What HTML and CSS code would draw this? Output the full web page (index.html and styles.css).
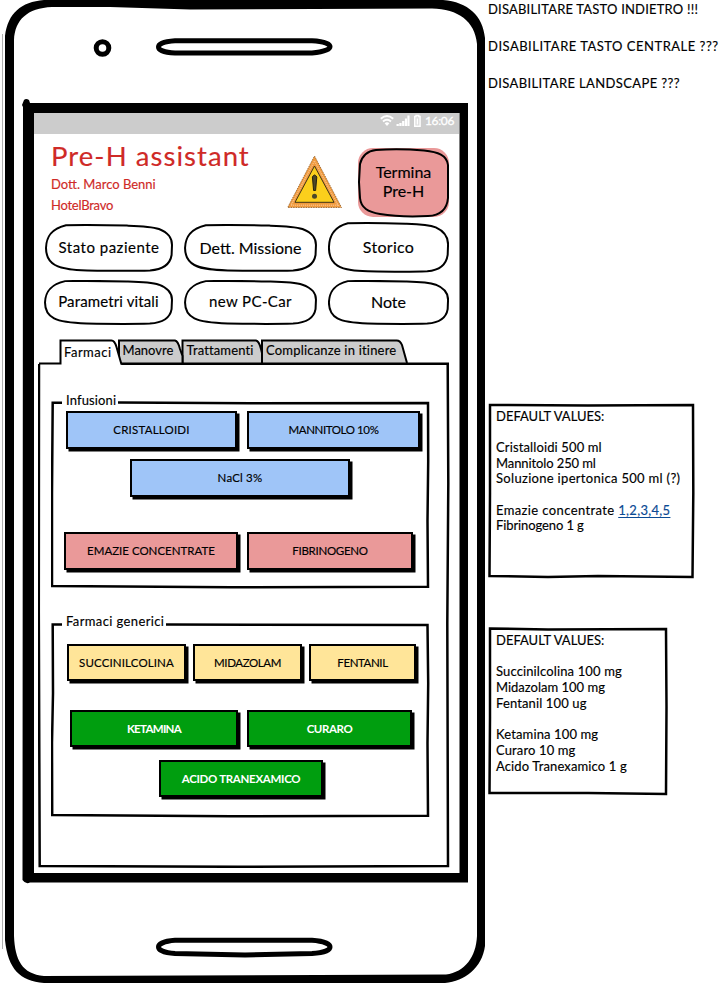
FILE: index.html
```html
<!DOCTYPE html>
<html lang="it">
<head>
<meta charset="utf-8">
<title>Pre-H assistant</title>
<link rel="stylesheet" href="styles.css">
</head>
<body>
<svg class="defs" aria-hidden="true">
  <symbol id="pill" viewBox="0 0 128 48" preserveAspectRatio="none">
    <path d="M21 1.200 C40 .8 60 1 82 1.600 C96 2 106 2.200 114 5 C124 9 127 14 127 21 L126.600 31 C125 41 117 45.600 105 46.400 C85 47.200 62 46.800 42 46.400 C30 46 18 45.500 10 41 C3 37 1 31 1 24 C1.300 14 5 5 21 1.200 Z"/>
  </symbol>
</svg>
<div class="page">
  <main class="phone">
    <svg class="shell" width="487" height="983" viewBox="0 0 487 983" aria-hidden="true">
      <path class="faint" d="M2.500 34V949"/>
      <path fill-rule="evenodd" d="M5 36 C8 13 21 2 44 0 L443 0 C468 2 483 16 485 38 L485 946 C482 968 465 981 445 983 L44 983 C20 981 8 969 5 940 Z M14 40 C15 20 27 8 52 7 L110 7 L190 9.500 L432 8.500 C458 9 475 21 477 44 L477 936 C476 957 465 972 446 974.500 L44 976 C22 974 15 960 14 936 Z"/>
      <circle class="line5" cx="102.500" cy="48" r="6.300"/>
      <path class="line5" d="M175 40.700 L312 40.700 C336 42 336 51 312 53 L175 53 C153 52 153 42 175 40.700 Z"/>
      <path class="line5" d="M175 940.300 L312 940.300 C336 942 336 952 312 953.500 L245 955 L175 953.500 C153 952 153 942 175 940.300 Z"/>
      <path fill-rule="evenodd" d="M22 105 L24 100 Q26 98 29 100 L30 103 H468 V882.500 H30 Q26 885 22.500 880 L23 107 Z M34 113 V873 H459.500 V113 Z"/>
    </svg>
    <div class="screen">
      <div class="status">
        <svg width="42" height="14" viewBox="0 0 42 14" aria-hidden="true">
          <path class="wave" d="M.8 4.800 Q7 -.7 13.200 4.800 M3 7.500 Q7 4 11 7.500"/>
          <path class="white" d="M4.600 9.200 Q7 7.200 9.400 9.200 L7 12 Z"/>
          <path class="white" d="M16.500 12v-2h2.300v2zM19.300 12V9h2.300v3zM22.100 12V7h2.300v5zM24.900 12V4.500h2.100V12zM27.400 12V1.500H29.500V12z"/>
          <path class="cell" d="M34.700 2.500h1.300v-1h2.800v1h1.300v9.800h-5.400z M37.400 4.500v6"/>
        </svg>
        <span>16:06</span>
      </div>
      <header class="head">
        <div class="who">
          <h1>Pre-H assistant</h1>
          <p>Dott. Marco Benni</p>
          <p class="hotel">HotelBravo</p>
        </div>
        <svg class="warn" width="56" height="54" viewBox="0 0 56 54" aria-hidden="true">
          <path fill="#f09a3c" stroke="#8c5a28" stroke-width=".8" stroke-dasharray="1.500 1" d="M27.500 1 L54.500 52.500 H.7 Z"/>
          <path fill="none" stroke="#f7c08a" stroke-width="1.600" stroke-dasharray="1 1" d="M27.500 6 L51 50.300 H4 Z"/>
          <path fill="#fbcf1c" stroke="#3d3218" stroke-width="1" d="M27.500 11 L47 47.300 H8 Z"/>
          <path fill="#4c4728" stroke="#25220f" stroke-width="1" d="M25.400 22 Q27.500 18 29.800 22 L28.600 35.500 H26.600 Z"/>
          <circle fill="#4c4728" cx="27.500" cy="41.300" r="2.500"/>
        </svg>
        <button class="pill stop"><svg viewBox="0 0 91 69"><path d="M18 2 C32 .8 50 1 66 2.500 C80 4 89 7 90 17 L90 50 C89 61 82 67.500 70 68 C50 69 34 68 22 66 C10 64 3 60 2 50 L1 34 L2 16 C4 8 9 3 18 2 Z"/></svg><span>Termina<br>Pre-H</span></button>
      </header>
      <nav class="menu">
        <button class="pill p1 wide5"><svg><use href="#pill"/></svg><span>Stato paziente</span></button>
        <button class="pill p2"><svg><use href="#pill"/></svg><span>Dett. Missione</span></button>
        <button class="pill p3 wide3"><svg><use href="#pill"/></svg><span>Storico</span></button>
        <button class="pill p4 wide1"><svg><use href="#pill"/></svg><span>Parametri vitali</span></button>
        <button class="pill p5 wide4"><svg><use href="#pill"/></svg><span>new PC-Car</span></button>
        <button class="pill p6"><svg><use href="#pill"/></svg><span>Note</span></button>
      </nav>
      <div class="tabs">
        <svg class="tabart" width="410" height="30" viewBox="0 0 410 30" aria-hidden="true">
          <path class="tab" d="M223 26 V2.500 H357 Q361 2 363 7 L368 25"/>
          <path class="tab" d="M143.500 26 V2.500 H217 Q220 3 222 11 L223 15 V26"/>
          <path class="tab" d="M80 26 V2.500 H136 Q139 3 141 11 L143.500 18 V26"/>
          <path class="rule" d="M82 25.800 H410"/>
          <path class="tab open" d="M0 25.500 H21.500 V2.500 H72 Q75.500 2 77.500 9 L82.500 26.500"/>
        </svg>
        <span class="t1 wide5">Farmaci</span><span class="t2">Manovre</span><span class="t3 wide1">Trattamenti</span><span class="t4 wide2">Complicanze in itinere</span>
      </div>
      <section class="panel">
        <svg class="frame" width="412" height="505" viewBox="0 0 412 505" aria-hidden="true"><path d="M1 1 L.8 250 L1.700 503 L200 503.800 L410 503 L409.300 260 L410.300 120 L409.700 1"/></svg>
        <section class="group infusions">
          <svg class="frame" width="380" height="188" viewBox="0 0 380 188" aria-hidden="true"><path d="M11 1.700 H1.700 L1 92 V185 L180 186.300 L377 185.700 L376.500 120 L377.200 60 L377 2 L200 2.200 L67 1.500"/></svg>
          <h2 class="wide1">Infusioni</h2>
          <div class="row r1"><button class="drug blue w171 wide2">CRISTALLOIDI</button><button class="drug blue w173 tight4">MANNITOLO 10%</button></div>
          <div class="row r2"><button class="drug blue w220 wide2">NaCl 3%</button></div>
          <div class="row r3"><button class="drug red w174">EMAZIE CONCENTRATE</button><button class="drug red w166 tight3">FIBRINOGENO</button></div>
        </section>
        <section class="group generic">
          <svg class="frame" width="380" height="195" viewBox="0 0 380 195" aria-hidden="true"><path d="M11 1.500 H1.700 L2 70 L1 120 L1.200 192 L180 193.300 L377 192.700 L376.500 120 L377.200 60 L376.500 2 L200 1.800 L115 1.500"/></svg>
          <h2 class="wide4">Farmaci generici</h2>
          <div class="row r4"><button class="drug yellow w119 wide1">SUCCINILCOLINA</button><button class="drug yellow w109 tight4">MIDAZOLAM</button><button class="drug yellow w107 tight4">FENTANIL</button></div>
          <div class="row r5"><button class="drug green w168 tight7">KETAMINA</button><button class="drug green w165 tight4">CURARO</button></div>
          <div class="row r6"><button class="drug green w164 tight3">ACIDO TRANEXAMICO</button></div>
        </section>
      </section>
    </div>
  </main>
  <aside class="notes">
    <p class="wide2">DISABILITARE TASTO INDIETRO !!!</p>
    <p class="wide5">DISABILITARE TASTO CENTRALE ???</p>
    <p class="wide4">DISABILITARE LANDSCAPE ???</p>
    <div class="note first">
      <svg class="frame" width="208" height="176" viewBox="0 0 208 176" aria-hidden="true"><path d="M2 2 L100 2.500 L205 2 L205.300 90 L204.500 174 L110 173 L60 174 L1.500 173 L2 90 Z"/></svg>
      <div>DEFAULT VALUES:</div><br>
      <div class="wide1">Cristalloidi 500 ml</div>
      <div class="tight1">Mannitolo 250 ml</div>
      <div class="wide3">Soluzione ipertonica 500 ml (?)</div><br>
      <div class="wide4">Emazie concentrate <a href="#">1,2,3,4,5</a></div>
      <div class="tight1">Fibrinogeno 1 g</div>
    </div>
    <div class="note second">
      <svg class="frame" width="181" height="169" viewBox="0 0 181 169" aria-hidden="true"><path d="M2 1.500 L60 2.500 L178 2 L178.500 80 L178 167 L100 166 L1.500 166 L2 90 Z"/></svg>
      <div>DEFAULT VALUES:</div><br>
      <div class="wide1">Succinilcolina 100 mg</div>
      <div>Midazolam 100 mg</div>
      <div class="wide1">Fentanil 100 ug</div><br>
      <div class="wide1">Ketamina 100 mg</div>
      <div class="wide1">Curaro 10 mg</div>
      <div class="wide1">Acido Tranexamico 1 g</div>
    </div>
  </aside>
</div>
</body>
</html>
```
FILE: styles.css
```css
* { box-sizing: border-box; }
body { margin: 0; background: #fff; color: #000; font: 13px/15.7px Lato, sans-serif; overflow: hidden; -webkit-text-stroke: .15px currentColor; }
h1, h2, p { margin: 0; font-weight: 400; }
button { margin: 0; padding: 0; border: 0; background: none; color: inherit; font-family: inherit; letter-spacing: 0; -webkit-text-stroke: inherit; }
.defs { position: absolute; width: 0; height: 0; }
.page { display: flex; width: 719px; height: 983px; }

/* Letter fitting */
.tight7 { letter-spacing: -.7px; }
.tight4 { letter-spacing: -.4px; }
.tight3 { letter-spacing: -.3px; }
.tight1 { letter-spacing: -.1px; }
.wide1 { letter-spacing: .13px; }
.wide2 { letter-spacing: .2px; }
.wide3 { letter-spacing: .31px; }
.wide4 { letter-spacing: .38px; }
.wide5 { letter-spacing: .5px; }

/* Phone */
.phone { position: relative; width: 488px; height: 983px; padding: 113px 0 0 34px; flex: none; }
.shell { position: absolute; left: 0; top: 0; }
.line5 { fill: none; stroke: #000; stroke-width: 5; }
.faint { stroke: #b0b0b0; }
.screen { position: relative; width: 425px; height: 760px; }
.status { display: flex; justify-content: flex-end; align-items: flex-start; gap: 3px; height: 21px; padding: 1px 5px 0 0; background: #ccc; color: #fff; font-size: 12px; letter-spacing: -.35px; -webkit-text-stroke: .3px #fff; }
.status span { width: 29px; line-height: 14px; }
.white { fill: #fff; }
.wave { fill: none; stroke: #fff; stroke-width: 2; }
.cell { fill: #ddd; stroke: #fff; stroke-width: 1.4; }

.head { display: flex; height: 88px; color: #cf2a27; }
.who { width: 236px; padding: 5px 0 0 17px; flex: none; }
.who h1 { font-size: 27.5px; line-height: 33px; letter-spacing: 1.05px; white-space: nowrap; }
.who p { margin-top: 4px; line-height: 16px; }
.who .hotel { margin-top: 5px; letter-spacing: -.25px; }
.warn { margin: 21px 0 0 17px; flex: none; }

/* Rounded buttons */
.pill { position: relative; display: block; color: #000; font-size: 16px; line-height: 19px; }
.pill svg { position: absolute; left: 0; top: 0; width: 100%; height: 100%; overflow: visible; fill: #fff; stroke: #000; stroke-width: 2; }
#pill path { vector-effect: non-scaling-stroke; }
.pill span { position: relative; }
.stop { width: 91px; height: 69px; margin: 14px 0 0 15px; padding-bottom: 3px; border-radius: 15px; background: #ea9999; flex: none; }
.stop svg { fill: #ea9999; }
.menu { display: grid; grid-template-columns: 129px 133px 121px; column-gap: 11px; height: 103px; padding-left: 10px; grid-template-rows: 51px 45px; row-gap: 7px; align-items: center; }
.p1, .p2 { height: 48px; }
.p1, .p4 { font-size: 15px; }
.p1 { margin-left: 1px; }
.p2 { padding-bottom: 1px; }
.p3 { height: 51px; padding-bottom: 2px; }
.p4, .p5, .p6 { height: 45px; padding-bottom: 2px; }
.p5 { font-size: 15px; }

/* Tabs */
.tabs { position: relative; display: flex; height: 25px; margin: 13px 0 0 5px; line-height: 16px; }
.tabart { position: absolute; left: -.5px; top: 0; }
.tab { fill: #ccc; stroke: #000; stroke-width: 2; }
.open { fill: #fff; }
.rule { stroke: #000; stroke-width: 2.5; }
.tabs span { position: relative; white-space: nowrap; padding-top: 4px; }
.tabs .t1 { width: 58.5px; margin-left: 25px; padding-top: 6px; }
.t2 { width: 64px; }
.t3 { width: 79.5px; }

/* Panel and groups */
.panel { position: relative; width: 410px; height: 505px; margin: 0 0 0 5px; padding: 38px 0 0 13px; }
.frame { position: absolute; left: -.7px; top: 0; fill: none; stroke: #000; stroke-width: 2.5; }
.group { position: relative; width: 378px; }
.group h2 { position: absolute; left: 14px; top: -9px; font-size: 13px; line-height: 16px; }
.generic h2 { top: -10px; }
.infusions { height: 222px; padding-top: 10px; }
.generic { height: 194px; padding-top: 20.5px; }
.row { display: flex; }
.drug { height: 37.5px; padding-top: 1px; border: 2px solid #000; box-shadow: 2.5px 2.5px 0 #000; font-size: 11.5px; line-height: 14px; }
.blue { background: #9fc5f8; }
.red { background: #ea9999; }
.yellow { background: #ffe599; }
.green { background: #009e0f; color: #fff; font-weight: 700; -webkit-text-stroke: 0; }
.r1 { padding-left: 14px; gap: 10px; }
.r2 { padding: 10.5px 0 0 78px; }
.r3 { padding: 35.5px 0 0 12px; gap: 9px; }
.r4 { padding-left: 15px; gap: 7px; }
.r5 { padding: 28.5px 0 0 18px; gap: 9px; }
.r6 { padding: 12.5px 0 0 107px; }
.w171 { width: 171px; }
.w173 { width: 173px; }
.w220 { width: 220px; }
.w174 { width: 174px; }
.w166 { width: 166px; }
.w119 { width: 119px; }
.w109 { width: 109px; }
.w107 { width: 107px; }
.w168 { width: 168px; }
.w165 { width: 165px; }
.w164 { width: 164px; }

/* Margin notes */
.notes { width: 231px; padding-top: 1px; }
.notes p { height: 37px; line-height: 16px; white-space: nowrap; }
.note { position: relative; padding: 6px 0 0 8px; white-space: nowrap; line-height: 15.7px; }
.note .frame { left: 0; }
.first { width: 208px; height: 176px; margin-top: 290.5px; }
.second { width: 181px; height: 169px; margin-top: 48.5px; }
.note a { color: #0b4a94; letter-spacing: .3px; text-underline-offset: 2px; }
```
